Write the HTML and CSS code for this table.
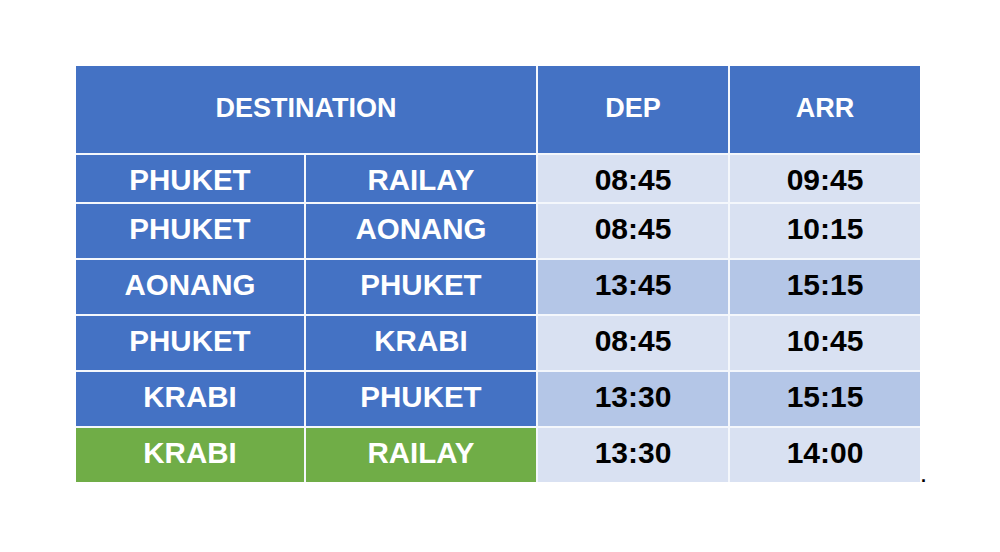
FILE: index.html
```html
<!DOCTYPE html>
<html>
<head>
<meta charset="utf-8">
<link rel="stylesheet" href="styles.css">
</head>
<body>
<div class="page">
  <div class="frame">
    <div class="timetable">
      <div class="cell head span2">DESTINATION</div>
      <div class="cell head">DEP</div>
      <div class="cell head">ARR</div>

      <div class="cell dest first">PHUKET</div>
      <div class="cell dest first">RAILAY</div>
      <div class="cell time light first">08:45</div>
      <div class="cell time light first">09:45</div>

      <div class="cell dest">PHUKET</div>
      <div class="cell dest">AONANG</div>
      <div class="cell time light">08:45</div>
      <div class="cell time light">10:15</div>

      <div class="cell dest">AONANG</div>
      <div class="cell dest">PHUKET</div>
      <div class="cell time mid">13:45</div>
      <div class="cell time mid">15:15</div>

      <div class="cell dest">PHUKET</div>
      <div class="cell dest">KRABI</div>
      <div class="cell time light">08:45</div>
      <div class="cell time light">10:45</div>

      <div class="cell dest">KRABI</div>
      <div class="cell dest">PHUKET</div>
      <div class="cell time mid">13:30</div>
      <div class="cell time mid">15:15</div>

      <div class="cell dest green">KRABI</div>
      <div class="cell dest green">RAILAY</div>
      <div class="cell time light">13:30</div>
      <div class="cell time light">14:00</div>
    </div>
    <span class="dot">.</span>
  </div>
</div>
</body>
</html>
```

FILE: styles.css
```css
html, body {
  margin: 0;
  padding: 0;
  background: #ffffff;
}

.page {
  padding: 66px 0 0 76px;
  font-family: "Liberation Sans", Arial, sans-serif;
  font-weight: bold;
}

.frame {
  position: relative;
  width: 844px;
}

.timetable {
  display: grid;
  width: 844px;
  grid-template-columns: 228px 230px 190px 190px;
  grid-template-rows: 87px 47px 54px 54px 54px 54px 54px;
  gap: 2px;
  background: #f4f7fc;
}

.cell {
  display: flex;
  align-items: center;
  justify-content: center;
  color: #ffffff;
  font-size: 29.5px;
  line-height: 1;
  padding-bottom: 4px;
}

.cell.first {
  padding-bottom: 0;
  padding-top: 2px;
}

.head {
  background: #4472c4;
  font-size: 27px;
  padding-bottom: 2px;
}

.span2 {
  grid-column: span 2;
}

.dest {
  background: #4472c4;
}

.green {
  background: #70ad47;
}

.time {
  color: #000000;
  font-size: 30px;
}

.light {
  background: #d9e1f2;
}

.mid {
  background: #b4c6e7;
}

.dot {
  position: absolute;
  left: 845px;
  top: 400px;
  color: #000000;
  font-size: 18px;
  line-height: 20px;
}
```
